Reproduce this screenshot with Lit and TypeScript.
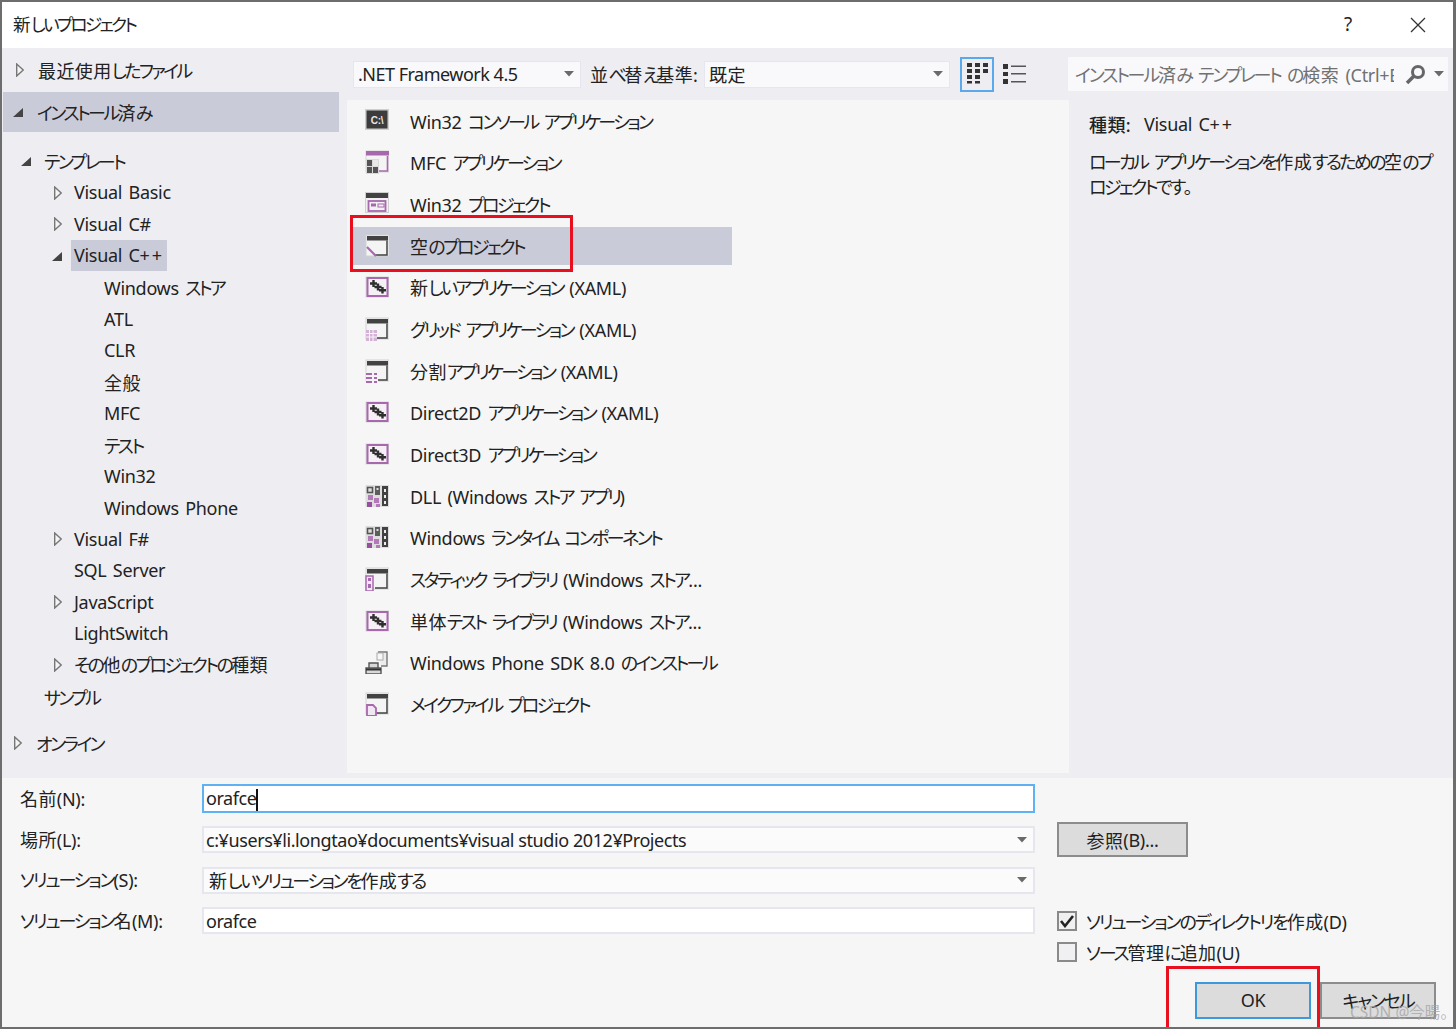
import { LitElement, html, css, svg } from "lit";
import { customElement } from "lit/decorators.js";

const D = "#424242";
const P = "#a868ae";
const frame = svg`<rect x="1" y="1" width="23" height="21" fill="#f4f4f4" stroke="#d2d2d2"/><rect x="2" y="2" width="21" height="4.500" fill="${D}"/><path d="M22 6.500v14.500H10" fill="none" stroke="${D}" stroke-width="1.500"/>`;
const xaml = svg`<rect x="0.500" y="1.500" width="24" height="21" fill="#d8d8d8"/><rect x="2.500" y="3" width="20" height="18" fill="#f4f0f5" stroke="${P}" stroke-width="2"/><path d="M8.500 5v7M5 8.500h7M13 8.500v7M9.500 12h7M17.500 12v6.500M14 15.200h7" stroke="#2f2f2f" stroke-width="2.400" fill="none"/>`;
const dll = svg`<rect x="0.500" y="1" width="23.500" height="22" fill="#dedede"/><rect x="2.500" y="3.500" width="5" height="5" fill="none" stroke="#555" stroke-width="1.600"/><rect x="10" y="2" width="5" height="9" fill="#5d5d5d"/><rect x="11.500" y="4" width="2" height="2" fill="#ddd"/><rect x="17" y="2" width="6" height="20" fill="${D}"/><rect x="19" y="5" width="2" height="3" fill="#eee"/><rect x="19" y="11" width="2" height="3" fill="#eee"/><rect x="19" y="17" width="2" height="3" fill="#eee"/><rect x="3" y="11" width="5" height="5" fill="#b27bb8"/><rect x="9" y="14" width="5" height="5" fill="#b27bb8"/><rect x="2" y="18" width="5" height="5" fill="#96509e"/><rect x="11" y="20" width="4" height="3" fill="#b27bb8"/>`;

const icons: Record<string, unknown> = {
  console: svg`<rect x="0" y="0" width="24" height="21" fill="#cfcfcf"/><rect x="1.500" y="1.500" width="21" height="18" fill="#3c3c3c"/><text x="12" y="14.500" text-anchor="middle" font-family="Liberation Sans" font-size="10" font-weight="700" fill="#e8e8e8">C:\\</text>`,
  mfc: svg`<rect x="1" y="1" width="23" height="21" fill="#f4f4f4" stroke="#d6d6d6"/><rect x="1" y="1" width="23" height="4.500" fill="${P}"/><path d="M22.500 6v15H14" fill="none" stroke="${P}" stroke-width="1.600"/><rect x="1" y="9" width="13" height="15" fill="#d9d9d9"/><rect x="2" y="10" width="5" height="6" fill="#555"/><rect x="2" y="17" width="5" height="6" fill="#555"/><rect x="8" y="17" width="5" height="6" fill="#555"/><rect x="8" y="10" width="5" height="6" fill="#e9e9e9"/>`,
  win32: svg`<rect x="0" y="0" width="24" height="21" fill="#d0d0d0"/><rect x="1" y="1" width="22" height="19" fill="#f1f1f1"/><rect x="1" y="1" width="22" height="5" fill="${D}"/><rect x="3.500" y="9" width="17" height="10" fill="none" stroke="${P}" stroke-width="1.800"/><rect x="6" y="11.500" width="5" height="3" fill="${P}"/><rect x="13" y="12" width="6" height="3" fill="none" stroke="${P}"/>`,
  empty: svg`${frame}<path d="M2 13L11 22" stroke="${P}" stroke-width="2.200"/>`,
  xaml: xaml,
  grid: svg`${frame}<rect x="1" y="13" width="11" height="11" fill="#d4b2d8"/><path d="M4.500 13v11M8 13v11M1 16.500h11M1 20h11" stroke="#f7f7f7" stroke-width="1"/>`,
  split: svg`${frame}<rect x="1" y="13" width="12" height="11" fill="#f4f4f4"/><g fill="${P}"><rect x="1" y="14" width="6" height="2"/><rect x="9" y="14" width="3" height="2"/><rect x="1" y="18" width="6" height="2"/><rect x="9" y="18" width="3" height="2"/><rect x="1" y="22" width="6" height="2"/><rect x="9" y="22" width="3" height="2"/></g>`,
  dll: dll,
  lib: svg`${frame}<rect x="1" y="9" width="7" height="15" fill="#f3e6f4" stroke="${P}" stroke-width="1.500"/><rect x="3" y="11" width="3" height="3" fill="${P}"/><rect x="3" y="17" width="3" height="4" fill="${P}"/>`,
  phone: svg`<path d="M13 2h9v14h-6" fill="#ececec" stroke="#777" stroke-width="1.400"/><rect x="12" y="3" width="6" height="7" fill="#f7f7f7" stroke="#aaa"/><path d="M1 18h15v6H1zM4 13h9v5H4z" fill="#d8d8d8" stroke="#555" stroke-width="1.400"/><path d="M1 19.500h15" stroke="#333" stroke-width="2"/>`,
  make: svg`${frame}<path d="M2 13h6l3 3v8H2z" fill="#f3e6f4" stroke="${P}" stroke-width="1.800"/>`,
};

const items: [string, string, boolean?][] = [
  ["console", "Win32 コンソール アプリケーション"],
  ["mfc", "MFC アプリケーション"],
  ["win32", "Win32 プロジェクト"],
  ["empty", "空のプロジェクト", true],
  ["xaml", "新しいアプリケーション (XAML)"],
  ["grid", "グリッド アプリケーション (XAML)"],
  ["split", "分割アプリケーション (XAML)"],
  ["xaml", "Direct2D アプリケーション (XAML)"],
  ["xaml", "Direct3D アプリケーション"],
  ["dll", "DLL (Windows ストア アプリ)"],
  ["dll", "Windows ランタイム コンポーネント"],
  ["lib", "スタティック ライブラリ (Windows ストア..."],
  ["xaml", "単体テスト ライブラリ (Windows ストア..."],
  ["phone", "Windows Phone SDK 8.0 のインストール"],
  ["make", "メイクファイル プロジェクト"],
];

type Node = [number, string, string, boolean?];
const tree: Node[] = [
  [0, "open", "テンプレート"],
  [1, "closed", "Visual Basic"],
  [1, "closed", "Visual C#"],
  [1, "open", "Visual C++", true],
  [2, "", "Windows ストア"],
  [2, "", "ATL"],
  [2, "", "CLR"],
  [2, "", "全般"],
  [2, "", "MFC"],
  [2, "", "テスト"],
  [2, "", "Win32"],
  [2, "", "Windows Phone"],
  [1, "closed", "Visual F#"],
  [1, "", "SQL Server"],
  [1, "closed", "JavaScript"],
  [1, "", "LightSwitch"],
  [1, "closed", "その他のプロジェクトの種類"],
  [0, "", "サンプル"],
];

/* The reference's UI font has narrow kana: tighten kana runs, open kanji runs and "++". */
const jp = (s: string) =>
  s.split(/([\u3040-\u30ff]+|[\u3400-\u9fff]+|\+\+)/).map((p) =>
    !p
      ? ""
      : p === "++"
      ? html`<span class="pp">${p}</span>`
      : /[\u3040-\u30ff]/.test(p)
      ? html`<span class="k">${p}</span>`
      : /[\u3400-\u9fff]/.test(p)
      ? html`<span class="h">${p}</span>`
      : p
  );

const arrow = (k: string) =>
  k === "open"
    ? html`<svg class="arrow" viewBox="0 0 10 10"><path d="M10 1v9H0z" fill="#444"/></svg>`
    : k === "closed"
    ? html`<svg class="arrow" viewBox="0 0 10 14"><path d="M2.700 1l6.500 6-6.500 6z" fill="#f4f4f4" stroke="#777" stroke-width="1.400"/></svg>`
    : html`<span class="arrow"></span>`;

const caret = html`<svg class="caret" viewBox="0 0 10 6"><path d="M0 0h10L5 5.500z" fill="#6a6a6a"/></svg>`;

@customElement("app-root")
export class AppRoot extends LitElement {
  static styles = css`
    :host {
      display: block;
      width: 1456px;
      height: 1029px;
      font-family: "Noto Sans", "Noto Sans CJK JP", sans-serif;
      font-feature-settings: "palt";
      font-size: 18px;
      color: #222;
      letter-spacing: -0.3px;
      word-spacing: 2px;
    }
    * { box-sizing: border-box; }
    .k { letter-spacing: -2.6px; }
    .h { letter-spacing: 0.4px; }
    .pp { letter-spacing: 1.800px; }
    .form .k, .foot .k { letter-spacing: -2.100px; }
    .field .k { letter-spacing: -2.400px; }
    .search .k { letter-spacing: -2.200px; }
    .window {
      position: relative;
      width: 1456px;
      height: 1029px;
      border: solid #6d6d6d;
      border-width: 2px 3px 2px 2px;
      background: #eeeef2;
      display: flex;
      flex-direction: column;
      overflow: hidden;
    }
    .title {
      height: 46px;
      flex: none;
      background: #fff;
      display: flex;
      align-items: center;
      padding: 0 0 3px 11px;
      font-size: 17.500px;
    }
    .title .grow { flex: 1; }
    .help { font-size: 19px; margin-right: 58px; }
    .close { width: 16px; height: 16px; margin-right: 27px; margin-top: 3px; }
    .main { flex: none; height: 730px; display: flex; }

    .left { width: 345px; flex: none; padding-right: 8px; }
    .row { display: flex; align-items: center; white-space: nowrap; }
    .top { height: 44px; padding-left: 12px; }
    .top.sel { height: 40px; background: #cacbd9; padding-left: 10px; margin-left: 1px; }
    .top .arrow { width: 10px; }
    .top .lab { margin-left: 14px; }
    .treebox { margin-top: 13.500px; }
    .node { height: 31.500px; }
    .l0 { padding-left: 19px; }
    .l1 { padding-left: 50px; }
    .l2 { padding-left: 102px; }
    .node .arrow { width: 10px; height: 14px; flex: none; }
    .l0 .lab { margin-left: 13px; }
    .l1 .lab { margin-left: 9px; padding: 0 3px; line-height: 31px; }
    .l2 .arrow { display: none; }
    .lab.hl { background: #cacbd9; }
    .arrow { display: block; height: 14px; flex: none; }
    .online { margin-top: 15px; height: 31px; padding-left: 10px; }

    .content { flex: 1; display: flex; flex-direction: column; min-width: 0; }
    .toolbar { height: 52px; flex: none; display: flex; align-items: center; padding: 0 0 0 6px; }
    .select {
      height: 27px;
      background: #f9f9fb;
      border: 1px solid #e6e6ee;
      display: flex;
      align-items: center;
      padding-left: 4px;
      white-space: nowrap;
      letter-spacing: -0.5px;
      word-spacing: 0;
    }
    .select .v { flex: 1; overflow: hidden; }
    .caret { width: 10px; height: 6px; flex: none; margin-right: 6px; }
    .fw { width: 228px; }
    .sortlab { width: 123px; padding-left: 9px; white-space: nowrap; }
    .sort { width: 246px; }
    .viewbtn {
      width: 34px; height: 35px;
      margin-left: 10px;
      border: 2px solid #5aa9ec;
      display: flex; align-items: center; justify-content: center;
    }
    .viewbtn svg { width: 22px; height: 25px; }
    .listbtn { width: 24px; height: 22px; margin-left: 8px; }
    .search {
      width: 380px; height: 34px;
      margin-left: 42px;
      background: #f9f9fb;
      display: flex; align-items: center;
      padding-left: 7px;
      color: #717171;
    }
    .search .q { width: 319px; overflow: hidden; white-space: nowrap; }
    .search .mag { width: 21px; height: 21px; margin-left: 11px; }
    .search .caret { margin-left: 8px; margin-right: 0; }

    .panes { flex: 1; display: flex; min-height: 0; padding-bottom: 5px; }
    .list { width: 722px; flex: none; background: #f6f6f6; padding: 0 0 0 6px; }
    .item { height: 41.650px; width: 379px; padding-left: 12px; }
    .item svg { width: 24px; height: 24px; flex: none; margin-right: 21px; }
    .item.sel { background: linear-gradient(transparent 2px, #cacbd9 2px, #cacbd9 40px, transparent 40px); }
    .detail { flex: 1; padding: 10px 0 0 20px; white-space: nowrap; }
    .kind { height: 28px; display: flex; align-items: center; }
    .kind b { font-weight: 500; width: 55px; }
    .desc { margin-top: 12px; line-height: 25px; }

    .bottom { flex: 1; background: #f6f6f6; position: relative; }
    .form {
      display: grid;
      grid-template-columns: 182px 833px 1fr;
      grid-template-rows: 41px 41px 40px 41px 22px;
      padding-left: 18px;
      align-items: center;
    }
    .form label { white-space: nowrap; padding-bottom: 2px; }
    .field {
      height: 27px;
      background: #fff;
      border: 2px solid #e6e6ee;
      display: flex; align-items: center;
      padding-left: 2px;
      white-space: nowrap;
      letter-spacing: -0.42px;
      word-spacing: 0;
    }
    .field .v { flex: 1; }
    .field.drop { background: #fbfbfc; }
    .field.sol { padding-left: 5px; }
    .field.focus { border: 2px solid #60b0f4; height: 29px; }
    .cursor { display: inline-block; width: 2px; height: 22px; background: #111; vertical-align: middle; margin-left: -1px; }
    .side { padding-left: 22px; }
    .check { display: flex; align-items: center; white-space: nowrap; }
    .box {
      width: 20px; height: 20px;
      background: #f0f0f3;
      border: 2px solid #8a8a8a;
      margin-right: 9px;
      display: flex; align-items: center; justify-content: center;
      flex: none;
    }
    .box svg { width: 16px; height: 14px; }
    .btn {
      background: #dcdcdc;
      border: 2px solid #8c8c8c;
      display: flex; align-items: center; justify-content: center;
      white-space: nowrap;
    }
    .browse { width: 131px; height: 35px; }
    .foot { display: flex; justify-content: flex-end; gap: 9px; padding: 19px 17px 0 0; }
    .foot .btn { width: 116px; height: 37px; padding-bottom: 1px; }
    .foot .ok { border-color: #3c99dc; }

    .mark { position: absolute; border: 3px solid #e8101e; pointer-events: none; }
    .mark1 { left: 348px; top: 213px; width: 223px; height: 57px; }
    .mark2 { left: 1164px; top: 964px; width: 154px; height: 64px; }
    .wm {
      position: absolute; left: 1348px; top: 998px;
      font-size: 15.500px; color: rgba(165,165,165,.8); white-space: nowrap; letter-spacing: 0; word-spacing: 0;
    }
  `;

  render() {
    return html`<div class="window">
      <div class="title">
        <span>${jp("新しいプロジェクト")}</span><span class="grow"></span>
        <span class="help">?</span>
        <svg class="close" viewBox="0 0 16 16"><path d="M1 1l14 14M15 1L1 15" stroke="#333" stroke-width="1.300"/></svg>
      </div>
      <div class="main">
        <div class="left">
          <div class="row top">${arrow("closed")}<span class="lab">${jp("最近使用したファイル")}</span></div>
          <div class="row top sel">${arrow("open")}<span class="lab">${jp("インストール済み")}</span></div>
          <div class="treebox">
            ${tree.map(
              ([l, a, t, s]) => html`<div class="row node l${l}">${arrow(a)}<span class="lab ${s ? "hl" : ""}">${jp(t)}</span></div>`
            )}
          </div>
          <div class="row top online">${arrow("closed")}<span class="lab">${jp("オンライン")}</span></div>
        </div>
        <div class="content">
          <div class="toolbar">
            <div class="select fw"><span class="v">.NET Framework 4.5</span>${caret}</div>
            <span class="sortlab">${jp("並べ替え基準:")}</span>
            <div class="select sort"><span class="v">${jp("既定")}</span>${caret}</div>
            <div class="viewbtn">
              <svg viewBox="0 0 22 25" fill="#333">
                ${[1, 9, 17].flatMap((x) =>
                  [1, 7, 13, 19].map((y) =>
                    x === 17 && y > 7 ? "" : svg`<rect x=${x} y=${y} width="5" height=${y === 19 ? 2.5 : 4}/>`
                  )
                )}
              </svg>
            </div>
            <svg class="listbtn" viewBox="0 0 24 22" fill="#333">
              <rect x="1" y="1" width="5" height="5"/><rect x="1" y="9" width="5" height="4"/><rect x="1" y="16" width="5" height="5"/>
              <rect x="9" y="2.500" width="15" height="1.500" fill="#555"/><rect x="9" y="10" width="15" height="1.500" fill="#555"/><rect x="9" y="18" width="15" height="1.500" fill="#555"/>
            </svg>
            <div class="search">
              <span class="q">${jp("インストール済み テンプレート の検索 (Ctrl+E)")}</span>
              <svg class="mag" viewBox="0 0 21 21"><circle cx="13" cy="8" r="5.500" fill="none" stroke="#666" stroke-width="3"/><path d="M9 12l-7 7" stroke="#666" stroke-width="3.500"/></svg>
              ${caret}
            </div>
          </div>
          <div class="panes">
            <div class="list">
              ${items.map(
                ([i, t, s]) => html`<div class="row item ${s ? "sel" : ""}"><svg viewBox="0 0 24 24">${icons[i]}</svg><span>${jp(t)}</span></div>`
              )}
            </div>
            <div class="detail">
              <div class="kind"><b>${jp("種類:")}</b><span>${jp("Visual C++")}</span></div>
              <div class="desc">${jp("ローカル アプリケーションを作成するための空のプ")}<br />${jp("ロジェクトです。")}</div>
            </div>
          </div>
        </div>
      </div>
      <div class="bottom">
        <div class="form">
          <label>${jp("名前(N):")}</label>
          <div class="field focus"><span class="v">orafce<i class="cursor"></i></span></div>
          <span></span>
          <label>${jp("場所(L):")}</label>
          <div class="field drop"><span class="v">c:¥users¥li.longtao¥documents¥visual studio 2012¥Projects</span>${caret}</div>
          <div class="side"><div class="btn browse">${jp("参照(B)...")}</div></div>
          <label>${jp("ソリューション(S):")}</label>
          <div class="field drop sol"><span class="v">${jp("新しいソリューションを作成する")}</span>${caret}</div>
          <span></span>
          <label>${jp("ソリューション名(M):")}</label>
          <div class="field"><span class="v">orafce</span></div>
          <div class="side check">
            <span class="box"><svg viewBox="0 0 16 14"><path d="M2 7l4 5 8-10" fill="none" stroke="#222" stroke-width="2.600"/></svg></span>
            <span>${jp("ソリューションのディレクトリを作成(D)")}</span>
          </div>
          <span></span><span></span>
          <div class="side check"><span class="box"></span><span>${jp("ソース管理に追加(U)")}</span></div>
        </div>
        <div class="foot">
          <div class="btn ok">OK</div>
          <div class="btn">${jp("キャンセル")}</div>
        </div>
      </div>
      <div class="mark mark1"></div>
      <div class="mark mark2"></div>
      <div class="wm">CSDN @今暘。</div>
    </div>`;
  }
}
